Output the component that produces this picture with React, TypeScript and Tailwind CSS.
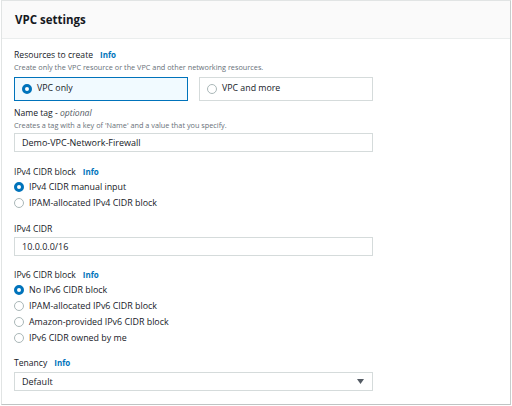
import React from 'react';

const font = { fontFamily: '"Open Sans", "Noto Sans", sans-serif' };

function Info() {
  return <span className="ml-[7px] text-[8px] font-bold text-[#0073bb]">Info</span>;
}

function Radio({ checked }: { checked?: boolean }) {
  return checked ? (
    <span className="w-[10px] h-[10px] rounded-full border-[3px] border-[#0073bb] bg-white shrink-0" />
  ) : (
    <span className="w-[10px] h-[10px] rounded-full border border-[#aab7b8] bg-white shrink-0" />
  );
}

function RadioRow({ label, checked }: { label: string; checked?: boolean }) {
  return (
    <div className="flex items-center gap-[5px] h-[16px]">
      <Radio checked={checked} />
      <span className="text-[8.9px] text-[#16191f]">{label}</span>
    </div>
  );
}

function Field({ value }: { value: string }) {
  return (
    <div className="w-[359px] h-[19px] border border-[#d5dbdb] bg-white flex items-center px-[7px] text-[9px] text-[#16191f]">
      {value}
    </div>
  );
}

function Label({ children, className = '' }: { children: React.ReactNode; className?: string }) {
  return (
    <div className={`text-[8.6px] text-[#16191f] leading-[13px] flex items-baseline ${className}`}>
      {children}
    </div>
  );
}

export default function App() {
  return (
    <div className="w-[512px] h-[406px] bg-white" style={font}>
      <div className="w-[510px] h-[405px] ml-[1px] border border-[#e1e4e4] border-b-[#bfc4c4] border-r-[#c8cccc] flex flex-col">
        <div className="h-[38px] bg-[#fafafa] border-b border-[#eaeded] flex items-center px-[13px]">
          <h2 className="text-[11.5px] font-bold text-[#16191f]">VPC settings</h2>
        </div>

        <div className="px-[12px] pt-[9px]">
          {/* Resources to create */}
          <Label>
            Resources to create <Info />
          </Label>
          <div className="text-[7.3px] text-[#687078] leading-[11px]">
            Create only the VPC resource or the VPC and other networking resources.
          </div>
          <div className="flex gap-[11px] mt-[4px]">
            <div className="w-[174px] h-[24px] border border-[#0073bb] bg-[#f1faff] flex items-center gap-[5px] px-[7px]">
              <Radio checked />
              <span className="text-[8.8px] text-[#16191f]">VPC only</span>
            </div>
            <div className="w-[174px] h-[24px] border border-[#d5dbdb] bg-white flex items-center gap-[5px] px-[7px]">
              <Radio />
              <span className="text-[8.8px] text-[#16191f]">VPC and more</span>
            </div>
          </div>

          {/* Name tag */}
          <Label className="mt-[6px]">
            Name tag -&nbsp;<i className="text-[#545b64]">optional</i>
          </Label>
          <div className="text-[7.3px] text-[#687078] leading-[11px]">
            Creates a tag with a key of 'Name' and a value that you specify.
          </div>
          <div className="mt-[2px]">
            <Field value="Demo-VPC-Network-Firewall" />
          </div>

          {/* IPv4 CIDR block */}
          <Label className="mt-[13px]">
            IPv4 CIDR block <Info />
          </Label>
          <div className="flex flex-col">
            <RadioRow label="IPv4 CIDR manual input" checked />
            <RadioRow label="IPAM-allocated IPv4 CIDR block" />
          </div>

          {/* IPv4 CIDR */}
          <Label className="mt-[12px]">IPv4 CIDR</Label>
          <div className="mt-[1px]">
            <Field value="10.0.0.0/16" />
          </div>

          {/* IPv6 CIDR block */}
          <Label className="mt-[12px]">
            IPv6 CIDR block <Info />
          </Label>
          <div className="flex flex-col">
            <RadioRow label="No IPv6 CIDR block" checked />
            <RadioRow label="IPAM-allocated IPv6 CIDR block" />
            <RadioRow label="Amazon-provided IPv6 CIDR block" />
            <RadioRow label="IPv6 CIDR owned by me" />
          </div>

          {/* Tenancy */}
          <Label className="mt-[10px]">
            Tenancy <Info />
          </Label>
          <div className="mt-[2px] w-[359px] h-[19px] border border-[#d5dbdb] bg-white flex items-center justify-between px-[7px] text-[9px] text-[#16191f]">
            Default
            <svg width="7" height="5" viewBox="0 0 7 5" className="mr-[1px]">
              <path d="M0 0H7L3.5 5Z" fill="#545b64" />
            </svg>
          </div>
        </div>
      </div>
    </div>
  );
}
